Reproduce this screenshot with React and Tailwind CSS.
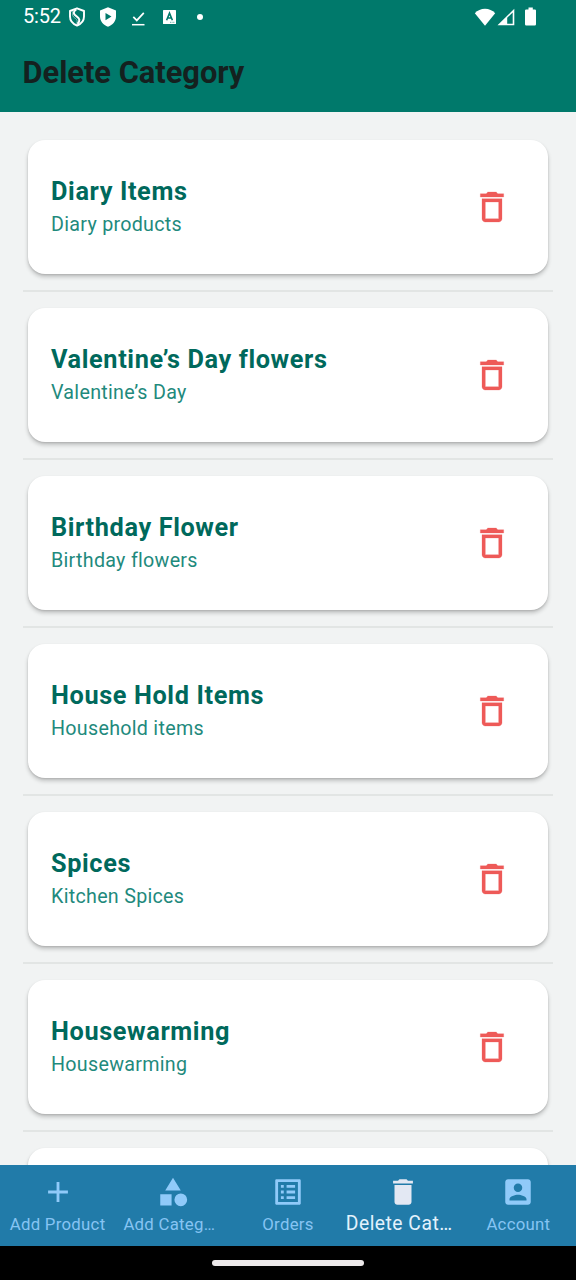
import React from "react";

const categories = [
  { title: "Diary Items", subtitle: "Diary products" },
  { title: "Valentine’s Day flowers", subtitle: "Valentine’s Day" },
  { title: "Birthday Flower", subtitle: "Birthday flowers" },
  { title: "House Hold Items", subtitle: "Household items" },
  { title: "Spices", subtitle: "Kitchen Spices" },
  { title: "Housewarming", subtitle: "Housewarming" },
];

const tabs = [
  { label: "Add Product", path: "M19 13h-6v6h-2v-6H5v-2h6V5h2v6h6v2z" },
  {
    label: "Add Categ…",
    path: "M12 2l-5.5 9h11zM17.5 13a4.5 4.5 0 1 0 0 9a4.5 4.5 0 1 0 0-9zM3 13.5h8v8H3z",
    truncated: true,
  },
  {
    label: "Orders",
    path: "M19 5v14H5V5h14m1.1-2H3.9c-.5 0-.9.4-.9.9v16.2c0 .4.4.9.9.9h16.2c.4 0 .9-.5.9-.9V3.9c0-.5-.5-.9-.9-.9zM11 7h6v2h-6V7zm0 4h6v2h-6v-2zm0 4h6v2h-6zM7 7h2v2H7zm0 4h2v2H7zm0 4h2v2H7z",
  },
  {
    label: "Delete Cat…",
    path: "M6 19c0 1.1.9 2 2 2h8c1.1 0 2-.9 2-2V7H6v12zM19 4h-3.5l-1-1h-5l-1 1H5v2h14V4z",
    active: true,
  },
  {
    label: "Account",
    path: "M3 5v14c0 1.1.89 2 2 2h14c1.1 0 2-.9 2-2V5c0-1.1-.9-2-2-2H5c-1.11 0-2 .9-2 2zm12 4c0 1.66-1.34 3-3 3s-3-1.34-3-3 1.34-3 3-3 3 1.34 3 3zm-9 8c0-2 4-3.1 6-3.1s6 1.1 6 3.1v1H6v-1z",
  },
];

function StatusBar() {
  return (
    <div className="flex h-[33px] items-center justify-between pl-[23px] pr-[40px] text-white">
      <div className="flex items-center">
        <span className="w-[45px] text-[20px] leading-[33px] tracking-[-0.2px]">5:52</span>
        <svg className="block h-[20px] w-[18px]" viewBox="0 0 18 20" fill="none" stroke="currentColor" strokeLinejoin="round">
          <path d="M9 1.300L16 4v5.500c0 4-3 7.500-7 9c-4-1.500-7-5-7-9V4z" strokeWidth="1.900" />
          <path d="M8.300 2.500C4.800 4.500 5.200 7.200 8.300 9.200S12.800 13.500 9.500 17" strokeWidth="2" />
          <path d="M5 3.500C3.800 8 4.500 9.500 7 11.200S9.500 14 8.500 16.500" strokeWidth="0.900" opacity="0.500" />
        </svg>
        <svg className="ml-[13px] block h-[20px] w-[18px]" viewBox="0 0 18 20" fill="currentColor">
          <path fillRule="evenodd" d="M9 .2L17 3.400v6C17 14 13.800 18 9 19.700C4.200 18 1 14 1 9.400v-6zM6.500 6v7.200l6-3.600z" />
        </svg>
        <svg className="ml-[14px] mt-[4px] block h-[14px] w-[14px]" viewBox="0 0 14 14" fill="none" stroke="currentColor">
          <path d="M2.300 4.800l3.500 3.600L12.800.8" strokeWidth="1.700" />
          <path d="M1 12.700h12.500" strokeWidth="1.500" />
        </svg>
        <svg className="ml-[18px] block h-[14px] w-[13px]" viewBox="0 0 13 14">
          <rect width="13" height="14" rx=".6" fill="white" />
          <path d="M3.600 10.200L6.500 3.200l2.900 7M4.700 8h3.600" fill="none" stroke="#00796b" strokeWidth="1.600" />
          <path d="M7 12.300h5" stroke="#00796b" strokeWidth=".6" strokeDasharray="1 .6" />
        </svg>
        <span className="ml-[21px] h-[6px] w-[6px] rounded-full bg-white" />
      </div>
      <div className="flex items-center">
        <svg className="block h-[18px] w-[22px]" viewBox="0 0 22 18" fill="currentColor">
          <path d="M11 17.700L.8 5.300C3.500 2.400 7 .8 11 .8s7.500 1.600 10.200 4.500z" />
        </svg>
        <svg className="ml-[1px] block h-[18px] w-[18px]" viewBox="0 0 18 18" fill="currentColor">
          <path fillRule="evenodd" d="M.5 17.200L17.300.8v16.400zM10.200 9.700v6h5.500V4.500z" />
        </svg>
        <svg className="ml-[10px] block h-[19px] w-[11px]" viewBox="0 0 11 19" fill="currentColor">
          <path d="M3.500.5h4.300v1.900h2q1.200 0 1.200 1.200v13.700q0 1.200-1.200 1.200H1.200Q0 18.500 0 17.300V3.600q0-1.200 1.200-1.200h2.300z" />
        </svg>
      </div>
    </div>
  );
}

function CategoryCard({ title, subtitle }) {
  return (
    <li className="h-[168px] shrink-0">
      <article className="mx-[5px] flex h-[134px] items-center justify-between rounded-[17px] bg-white pl-[23px] pr-[36px] shadow-[0_3px_4px_rgba(0,0,0,0.2),0_1px_2px_rgba(0,0,0,0.12)]">
        <div className="pt-[2px]">
          <h2 className="text-[25.3px] font-bold leading-[34px] tracking-[0.62px] text-[#00695c]">{title}</h2>
          <p className="text-[19.7px] leading-[32px] tracking-[0.28px] text-[#1f8a7d]">{subtitle}</p>
        </div>
        <button className="block" aria-label="Delete">
          <svg className="block h-[40px] w-[40px]" viewBox="0 0 24 24" fill="#ee5a58" stroke="#ee5a58" strokeWidth="0.15">
            <path d="M6 19c0 1.100.9 2 2 2h8c1.100 0 2-.9 2-2V7H6v12zM8 9h8v10H8V9zm7.500-5l-1-1h-5l-1 1H5v2h14V4z" />
          </svg>
        </button>
      </article>
      <div className="mt-[16px] h-[2px] bg-[#e2e5e4]" />
    </li>
  );
}

function Tab({ label, path, active, truncated }) {
  return (
    <button className={active ? "flex min-w-0 flex-col items-center text-[#e3e8f3]" : "flex min-w-0 flex-col items-center text-[#90caf9]"}>
      <svg className="mt-[10px] block h-[34px] w-[34px] shrink-0" viewBox="0 0 24 24" fill="currentColor">
        <path d={path} />
      </svg>
      <span
        className={
          active
            ? "mr-[8px] mt-[3px] whitespace-nowrap text-[19.3px] leading-[24px] tracking-[0.5px] text-[#e3f2fd]"
            : truncated
              ? "mr-[7px] mt-[3px] whitespace-nowrap text-[16.8px] leading-[24px] tracking-[0.27px] text-[#86c4f3]"
              : "mt-[3px] whitespace-nowrap text-[16.8px] leading-[24px] tracking-[0.27px] text-[#86c4f3]"
        }
      >
        {label}
      </span>
    </button>
  );
}

export default function App() {
  return (
    <div className="flex h-[1280px] w-[576px] flex-col overflow-hidden bg-[#f1f3f3] font-['Roboto',sans-serif]">
      <header className="h-[112px] shrink-0 bg-[#00796b]">
        <StatusBar />
        <h1 className="pl-[22.5px] pt-[1px] text-[30.8px] font-bold leading-[78px] text-[#14211f]">Delete Category</h1>
      </header>
      <main className="min-h-0 flex-1 overflow-hidden">
        <ul className="flex flex-col px-[23px] pt-[28px]">
          {categories.map((category) => (
            <CategoryCard key={category.title} {...category} />
          ))}
          <li className="mx-[5px] h-[134px] rounded-[17px] bg-white shadow-[0_3px_4px_rgba(0,0,0,0.2),0_1px_2px_rgba(0,0,0,0.12)]" />
        </ul>
      </main>
      <nav className="grid h-[81px] shrink-0 grid-cols-5 bg-[#217ba9]">
        {tabs.map((tab) => (
          <Tab key={tab.label} {...tab} />
        ))}
      </nav>
      <footer className="flex h-[34px] shrink-0 items-center justify-center bg-black">
        <div className="h-[6px] w-[152px] rounded-full bg-[#ece9ea]" />
      </footer>
    </div>
  );
}
